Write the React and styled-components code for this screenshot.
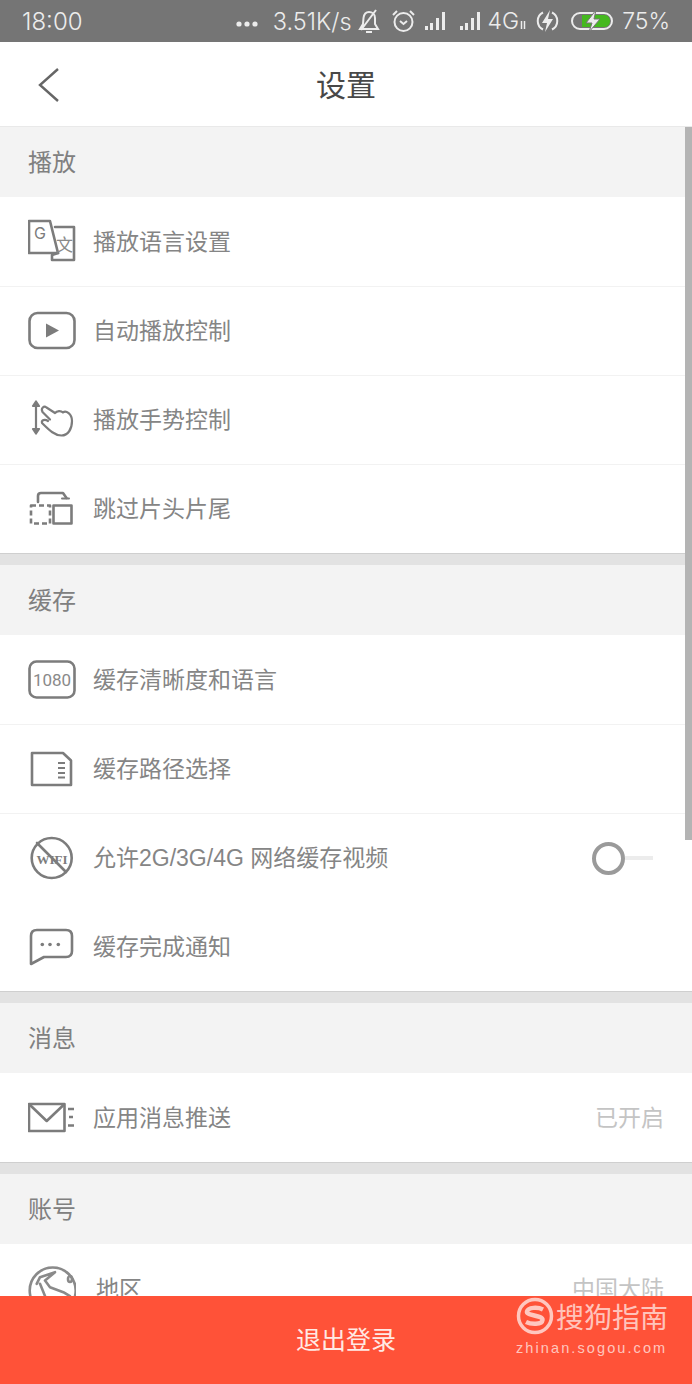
import React from 'react'
import styled, { createGlobalStyle } from 'styled-components'

const GlobalStyle = createGlobalStyle`
    html, body {
        margin: 0;
        padding: 0;
        background: #fff;
    }
    body {
        font-family: Inter, "Noto Sans CJK SC", "Noto Sans", sans-serif;
    }
`

const Page = styled.div`
    position: relative;
    width: 692px;
    height: 1384px;
    display: flex;
    flex-direction: column;
    overflow: hidden;
`

const StatusBar = styled.div`
    flex: none;
    height: 42px;
    background: #757575;
    color: #ececec;
    display: flex;
    align-items: center;
    padding: 0 22px;
    font-family: Inter, "Liberation Sans", sans-serif;
    font-weight: 300;
`

const Clock = styled.span`
    font-size: 24px;
    flex: 1;
`

const StatusText = styled.span`
    font-size: ${p => p.$size || 23}px;
    margin-left: ${p => p.$ml || 0}px;
`

const StatusIcon = styled.svg`
    flex: none;
    margin-left: ${p => p.$ml || 0}px;
    margin-top: ${p => p.$mt || 0}px;
    fill: none;
    stroke: #ececec;
    stroke-width: 2;
`

const Header = styled.div`
    flex: none;
    height: 84px;
    background: #fff;
    border-bottom: 1px solid #e9e9e9;
    position: relative;
    display: flex;
    align-items: center;
    justify-content: center;
`

const BackButton = styled.svg`
    position: absolute;
    left: 38px;
    top: 26px;
    fill: none;
    stroke: #666;
    stroke-width: 2.4;
`

const Title = styled.h1`
    margin: 0 0 2px;
    font-size: 30px;
    font-weight: 400;
    color: #484848;
`

const Content = styled.div`
    flex: 1;
    min-height: 0;
    position: relative;
    overflow: hidden;
`

const ScrollThumb = styled.div`
    position: absolute;
    top: 0;
    right: 0;
    width: 7px;
    height: 713px;
    background: #b4b4b4;
`

const SectionTitle = styled.div`
    height: 70px;
    box-sizing: border-box;
    background: #f3f3f3;
    color: #808080;
    font-size: 24px;
    display: flex;
    align-items: center;
    padding: 0 0 4px 28px;
`

const Band = styled.div`
    height: 11px;
    background: #e2e2e2;
    border-top: 1px solid #cfcfcf;
`

const Row = styled.div`
    height: 89px;
    box-sizing: border-box;
    background: #fff;
    display: flex;
    align-items: center;
    padding: 0 28px;
    border-top: 1px solid ${p => (p.$line ? '#f2f2f2' : 'transparent')};
`

const Icon = styled.svg`
    flex: none;
    width: 48px;
    height: 48px;
    margin-right: ${p => p.$gap || 17}px;
    fill: none;
    stroke: #7c7c7c;
    stroke-width: ${p => p.$stroke || 2.6};
    stroke-linejoin: round;
    stroke-linecap: round;
`

const Label = styled.span`
    flex: 1;
    font-family: "Liberation Sans", "Noto Sans CJK SC", sans-serif;
    font-size: 23px;
    color: #858585;
    white-space: nowrap;
    padding-bottom: 5px;
`

const Value = styled.span`
    font-size: 23px;
    color: #c4c4c4;
    padding-bottom: 4px;
`

const Toggle = styled.div`
    display: flex;
    align-items: center;
    margin-right: 11px;
    margin-left: auto;
`

const ToggleKnob = styled.div`
    width: 33px;
    height: 33px;
    box-sizing: border-box;
    border: 4px solid #9a9a9a;
    border-radius: 50%;
    background: #fff;
`

const ToggleTrack = styled.div`
    width: 28px;
    height: 4px;
    background: #ececec;
`

const Footer = styled.div`
    flex: none;
    height: 88px;
    box-sizing: border-box;
    background: #ff5238;
    color: #ffe9e4;
    font-size: 25px;
    display: flex;
    align-items: center;
    justify-content: center;
    padding-bottom: 4px;
`

const Watermark = styled.div`
    position: absolute;
    left: 516px;
    top: 1296px;
    width: 152px;
    color: rgba(255, 255, 255, 0.68);
`

const WatermarkTop = styled.div`
    display: flex;
    align-items: center;
    height: 40px;
    font-size: 28px;
    white-space: nowrap;
`

const WatermarkLogo = styled.svg`
    flex: none;
    margin-right: 2px;
    fill: none;
    stroke: rgba(255, 255, 255, 0.68);
`

const WatermarkUrl = styled.div`
    margin-top: 4px;
    font-family: "Liberation Sans", sans-serif;
    font-size: 14.5px;
    letter-spacing: 2.1px;
    white-space: nowrap;
`

const SignalIcon = ({ ml }) => (
    <StatusIcon $ml={ml} width="23" height="22" viewBox="0 0 23 22">
        <g fill="#ececec" stroke="none">
            <rect x="1" y="16" width="3" height="4" />
            <rect x="6" y="13" width="3" height="7" />
            <rect x="12" y="8" width="3" height="12" />
            <rect x="18" y="2" width="3" height="18" />
        </g>
    </StatusIcon>
)

const icons = {
    translate: (
        <Icon viewBox="0 0 48 48">
            <path d="M1 3H22L30 35H1Z" />
            <path d="M27 9H46V42H24V37L30 35" />
            <text x="6" y="21" fontSize="16" fill="#7c7c7c" stroke="none" fontFamily="Inter">G</text>
            <text x="28" y="33" fontSize="17" fill="#8a8a8a" stroke="none">文</text>
        </Icon>
    ),
    play: (
        <Icon viewBox="0 0 48 48">
            <rect x="1.500" y="6" width="45" height="35" rx="8" />
            <path d="M18 16.500L31 23.500L18 30.500Z" fill="#7c7c7c" stroke="none" />
        </Icon>
    ),
    gesture: (
        <Icon viewBox="0 0 48 48" $stroke={2.2}>
            <path d="M8 8V35" />
            <path d="M5 10L8 5.500L11 10Z M5 33L8 37.500L11 33Z" fill="#7c7c7c" />
            <path d="M22 23.500L14.500 16C12.500 12 16 9.500 18.500 11.500L27 17C29 14.500 33 14.500 35 16.500C38 14 44 18 44 25C44 33 40 39.500 33.500 39.500C27 39.500 22 35 14 27C13 24 17 23 20 25" />
        </Icon>
    ),
    skip: (
        <Icon viewBox="0 0 48 48">
            <rect x="3" y="20.500" width="19" height="18" strokeDasharray="5 3" strokeLinecap="butt" />
            <rect x="25.500" y="20.500" width="18" height="18" />
            <path d="M10 17V11C10 9 11 8 13 8H35L38.500 13" />
            <path d="M34 13.500H41" strokeWidth="2" />
        </Icon>
    ),
    quality: (
        <Icon viewBox="0 0 48 48">
            <rect x="1.500" y="5.500" width="45" height="36" rx="7" />
            <text x="24" y="30" fontSize="17" textAnchor="middle" fill="#8a8a8a" stroke="none" fontFamily="Roboto">1080</text>
        </Icon>
    ),
    sdcard: (
        <Icon viewBox="0 0 48 48">
            <path d="M4 8H35L43 15.500V40H4Z" />
            <path d="M30 18H37M30 23H37M30 28H37M30 32.500H37" strokeWidth="2.200" strokeLinecap="butt" />
        </Icon>
    ),
    nowifi: (
        <Icon viewBox="0 0 48 48">
            <circle cx="23.700" cy="24" r="20" />
            <text x="24" y="29.500" fontSize="13" fontWeight="700" textAnchor="middle" fill="#7c7c7c" stroke="none" fontFamily="Liberation Serif">WIFI</text>
            <path d="M9 9L38 38" />
        </Icon>
    ),
    chat: (
        <Icon viewBox="0 0 48 48">
            <path d="M3 41V13C3 9 5 7 9 7H38C42 7 44 9 44 13V28C44 32 42 34 38 34H16Z" />
            <g fill="#7c7c7c" stroke="none">
                <circle cx="14.300" cy="21.500" r="1.800" />
                <circle cx="22" cy="21.500" r="1.800" />
                <circle cx="30.300" cy="21.500" r="1.800" />
            </g>
        </Icon>
    ),
    mail: (
        <Icon viewBox="0 0 48 48">
            <rect x="1" y="10" width="35.500" height="27" />
            <path d="M2 11L18.700 27L35.500 11" />
            <path d="M40 15H46M41 23H45M40 31.500H46" strokeLinecap="butt" />
        </Icon>
    ),
    globe: (
        <Icon viewBox="0 0 48 48" $gap={20}>
            <circle cx="24.700" cy="25.500" r="23" stroke="#8a8a8a" />
            <path d="M8.700 18.800L12 12.200L27 7.200L17 15.500L22 22.200L35.300 27.200L42 31.200M12 18.800L17 31" stroke="#8a8a8a" />
            <ellipse cx="42" cy="14" rx="2" ry="3" stroke="#8a8a8a" />
        </Icon>
    ),
}

const sections = [
    {
        title: '播放',
        rows: [
            { icon: 'translate', label: '播放语言设置' },
            { icon: 'play', label: '自动播放控制', line: true },
            { icon: 'gesture', label: '播放手势控制', line: true },
            { icon: 'skip', label: '跳过片头片尾', line: true },
        ],
    },
    {
        title: '缓存',
        rows: [
            { icon: 'quality', label: '缓存清晰度和语言' },
            { icon: 'sdcard', label: '缓存路径选择', line: true },
            { icon: 'nowifi', label: '允许2G/3G/4G 网络缓存视频', line: true, toggle: true },
            { icon: 'chat', label: '缓存完成通知' },
        ],
    },
    {
        title: '消息',
        rows: [{ icon: 'mail', label: '应用消息推送', value: '已开启' }],
    },
    {
        title: '账号',
        rows: [{ icon: 'globe', label: '地区', value: '中国大陆' }],
    },
]

function App() {
    return (
        <Page>
            <GlobalStyle />
            <StatusBar>
                <Clock>18:00</Clock>
                <StatusIcon width="22" height="6" viewBox="0 0 22 6" $mt={6}>
                    <g fill="#ececec" stroke="none">
                        <circle cx="3" cy="3" r="2.600" />
                        <circle cx="11" cy="3" r="2.600" />
                        <circle cx="19" cy="3" r="2.600" />
                    </g>
                </StatusIcon>
                <StatusText $size={23.5} $ml={15}>3.51K/s</StatusText>
                <StatusIcon $ml={6} width="22" height="24" viewBox="0 0 22 24">
                    <path d="M2 20H20L17 15V9C17 5 14 3 11 3C8 3 6 5 5.500 9L5 15Z M8 23H14 M3 21L18 1" />
                </StatusIcon>
                <StatusIcon $ml={12} width="23" height="24" viewBox="0 0 23 24">
                    <circle cx="11.500" cy="13" r="9" />
                    <path d="M8 12L11.500 15L15 12 M1 6L5 2 M22 6L18 2" />
                </StatusIcon>
                <SignalIcon ml={9} />
                <SignalIcon ml={12} />
                <StatusText $ml={6}>4G</StatusText>
                <StatusIcon $ml={1} $mt={8} width="6" height="8" viewBox="0 0 6 8">
                    <path d="M1.500 0V8M4.500 0V8" strokeWidth="1.500" />
                </StatusIcon>
                <StatusIcon $ml={10} width="23" height="24" viewBox="0 0 23 24">
                    <path d="M7 3.500A9.500 9.500 0 0 0 7 20.500M16 3.500A9.500 9.500 0 0 1 16 20.500" />
                    <path d="M14 1L6 14H11L9 23L17 10H12Z" fill="#ececec" stroke="none" />
                </StatusIcon>
                <StatusIcon $ml={12} width="42" height="24" viewBox="0 0 42 24">
                    <rect x="1" y="4" width="40" height="16" rx="8" />
                    <path d="M11 6H33C36 6 39 8 39 12C39 16 36 18 33 18H11Z" fill="#45b81f" stroke="none" />
                    <path d="M25 1L15 14H21L18 23L29 10H23Z" fill="#ececec" stroke="#757575" strokeWidth="1" />
                </StatusIcon>
                <StatusText $ml={9}>75%</StatusText>
            </StatusBar>

            <Header>
                <BackButton width="22" height="34" viewBox="0 0 22 34">
                    <path d="M20 1L2 17L20 33" />
                </BackButton>
                <Title>设置</Title>
            </Header>

            <Content>
                {sections.map((section, i) => (
                    <div key={section.title}>
                        {i > 0 && <Band />}
                        <SectionTitle>{section.title}</SectionTitle>
                        {section.rows.map(row => (
                            <Row key={row.label} $line={row.line}>
                                {icons[row.icon]}
                                <Label>{row.label}</Label>
                                {row.value && <Value>{row.value}</Value>}
                                {row.toggle && (
                                    <Toggle>
                                        <ToggleKnob />
                                        <ToggleTrack />
                                    </Toggle>
                                )}
                            </Row>
                        ))}
                    </div>
                ))}
                <ScrollThumb />
            </Content>

            <Footer>退出登录</Footer>

            <Watermark>
                <WatermarkTop>
                    <WatermarkLogo width="38" height="38" viewBox="0 0 38 38">
                        <circle cx="19" cy="19" r="16.500" strokeWidth="3.500" />
                        <path d="M27 12.500C22 10 12 10 11 14.500C10 19 27 18 26.500 23C26 28 15 27.500 10 25" strokeWidth="4.500" />
                    </WatermarkLogo>
                    搜狗指南
                </WatermarkTop>
                <WatermarkUrl>zhinan.sogou.com</WatermarkUrl>
            </Watermark>
        </Page>
    )
}

export default App
